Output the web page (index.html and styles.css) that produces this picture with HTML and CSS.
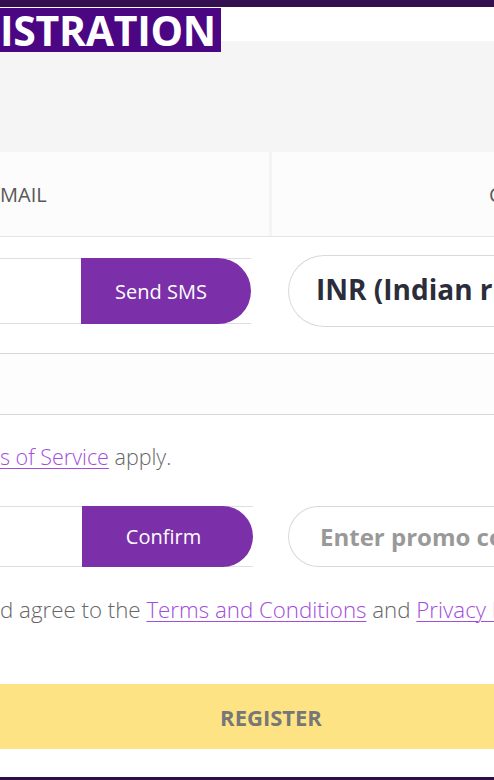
FILE: index.html
```html
<!DOCTYPE html>
<html lang="en">
<head>
<meta charset="utf-8">
<title>Registration</title>
<link rel="stylesheet" href="styles.css">
</head>
<body>
<div class="topbar"></div>
<header class="hero">
  <h1 class="banner"><span class="pre">REG</span><span>ISTRATION</span></h1>
</header>
<nav class="tabs">
  <div class="tab tab-left"><span class="pre">E</span><span>MAIL</span></div>
  <div class="tab tab-right">CONTACTS</div>
</nav>
<main class="form">
  <div class="row row-top">
    <div class="col-left">
      <div class="combo">
        <div class="combo-input"></div>
        <button class="btn">Send SMS</button>
      </div>
    </div>
    <div class="col-right">
      <div class="select">INR (Indian rupee)</div>
    </div>
  </div>
  <div class="field"></div>
  <p class="note"><span class="pre">This site is protected by reCAPTCHA and the Google <a href="#">Privacy Policy</a> and <a href="#">Term</a></span><a href="#">s of Service</a>&nbsp;apply.</p>
  <div class="row row-promo">
    <div class="col-left col-left-promo">
      <div class="combo combo-promo">
        <div class="combo-input"></div>
        <button class="btn btn-confirm">Confirm</button>
      </div>
    </div>
    <div class="col-right">
      <div class="promo">Enter promo code</div>
    </div>
  </div>
  <p class="terms"><span class="pre">I confirm that I am of legal age an</span>d agree to the&nbsp;<a href="#">Terms and Conditions</a>&nbsp;and&nbsp;<a href="#">Privacy Policy</a></p>
  <button class="register">REGISTER</button>
</main>
<div class="bottombar"></div>
</body>
</html>
```
FILE: styles.css
```css
html, body {
  margin: 0;
  padding: 0;
}
body {
  width: 494px;
  height: 780px;
  overflow: hidden;
  background: #ffffff;
  font-family: "Open Sans", "Noto Sans", sans-serif;
  position: relative;
}
.pre {
  width: 0;
  display: inline-flex;
  justify-content: flex-end;
  white-space: nowrap;
}
.topbar {
  height: 7px;
  background: #351051;
}
.hero {
  height: 145px;
  background: linear-gradient(#ffffff 34px, #f5f5f5 34px);
  padding-top: 1px;
  box-sizing: border-box;
}
.banner {
  margin: 0;
  width: 221px;
  height: 44px;
  background: #4b0684;
  color: #ffffff;
  font-size: 41px;
  font-weight: 700;
  line-height: 44px;
  display: flex;
  align-items: center;
  white-space: nowrap;
  letter-spacing: -0.3px;
}
.tabs {
  display: flex;
  gap: 3px;
  height: 85px;
  background: #f4f4f4;
  border-bottom: 1px solid #e6e6e6;
  box-sizing: border-box;
}
.tab {
  background: #fcfcfc;
  display: flex;
  align-items: center;
  font-size: 20px;
  color: #585858;
  white-space: nowrap;
}
.tab-left {
  width: 269px;
  flex: none;
}
.tab-right {
  flex: none;
  width: 300px;
  padding-left: 217px;
}
.form {
  display: flex;
  flex-direction: column;
}
.row {
  display: flex;
  align-items: center;
  gap: 37px;
}
.row-top {
  margin-top: 18px;
  height: 72px;
}
.col-left {
  width: 251px;
  flex: none;
}
.col-right {
  width: 300px;
  flex: none;
}
.combo {
  display: flex;
  height: 66px;
  border-top: 1px solid #dedede;
  border-bottom: 1px solid #dedede;
  box-sizing: border-box;
}
.combo-input {
  flex: 1;
}
.btn {
  width: 170px;
  margin: -1px 0;
  border: none;
  border-radius: 0 33px 33px 0;
  background: #7b2fa9;
  color: #ffffff;
  font-family: "Open Sans", "Noto Sans", sans-serif;
  font-size: 20px;
  padding: 0 10px 0 0;
}
.select {
  height: 72px;
  box-sizing: border-box;
  border: 1px solid #d9d9d9;
  border-right: none;
  border-radius: 36px 0 0 36px;
  display: flex;
  align-items: center;
  padding-left: 27px;
  padding-bottom: 4px;
  font-size: 28px;
  font-weight: 700;
  color: #2b2d3a;
  white-space: nowrap;
  overflow: hidden;
}
.field {
  margin-top: 26px;
  height: 62px;
  border-top: 1px solid #d8d8d8;
  border-bottom: 1px solid #d8d8d8;
  box-sizing: border-box;
  background: #fdfdfd;
}
.note {
  margin: 27px 0 0;
  height: 30px;
  line-height: 30px;
  font-size: 21.5px;
  font-weight: 300;
  color: #666666;
  white-space: nowrap;
  display: flex;
}
a {
  color: #a24ddc;
  text-decoration: underline;
  text-decoration-thickness: 1px;
  text-underline-offset: 3px;
}
.row-promo {
  margin-top: 34px;
  height: 61px;
  gap: 35px;
}
.col-left-promo {
  width: 253px;
}
.combo-promo {
  height: 61px;
}
.btn-confirm {
  width: 171px;
  border-radius: 0 31px 31px 0;
  padding: 0 8px 0 0;
}
.promo {
  height: 61px;
  box-sizing: border-box;
  border: 1px solid #d9d9d9;
  border-right: none;
  border-radius: 31px 0 0 31px;
  display: flex;
  align-items: center;
  padding-left: 31px;
  font-size: 24px;
  font-weight: 700;
  color: #999999;
  white-space: nowrap;
  overflow: hidden;
}
.terms {
  margin: 28px 0 0;
  height: 30px;
  line-height: 30px;
  font-size: 22.3px;
  font-weight: 300;
  color: #666666;
  white-space: nowrap;
  display: flex;
}
.register {
  margin-top: 59px;
  width: 542px;
  height: 65px;
  border: none;
  background: #fde383;
  color: #777777;
  font-family: "Open Sans", "Noto Sans", sans-serif;
  font-size: 22px;
  font-weight: 700;
  padding: 0;
}
.bottombar {
  position: absolute;
  left: 0;
  right: 0;
  bottom: 0;
  height: 3px;
  background: #2e0f4a;
}
```
